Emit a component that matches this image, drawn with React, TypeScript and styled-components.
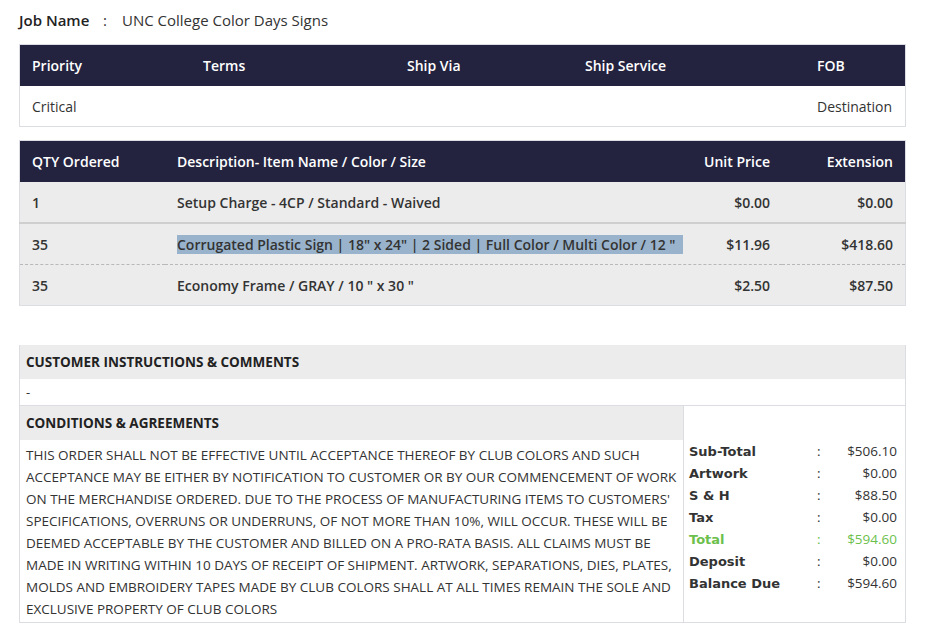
import React from "react";
import styled, { createGlobalStyle } from "styled-components";

const G = createGlobalStyle`
  body { margin: 0; background: #fff; font-family: "Open Sans", sans-serif; color: #333; }
`;
const Page = styled.div`padding: 8px 22px 0 19px; width: 887px;`;
const JobRow = styled.div`display: flex; align-items: center; height: 24px; font-size: 15px; margin-bottom: 12px;`;
const JobLabel = styled.span`font-weight: 600; color: #222; width: 84px;`;
const JobColon = styled.span`width: 19px;`;
const Table = styled.table<{ mb: number }>`width: 100%; table-layout: fixed; border-collapse: collapse; font-size: 14px; border: 1px solid #dcdde3; margin-bottom: ${p => p.mb}px;`;
const Th = styled.th<{ w?: number; r?: boolean }>`
  background: #23233f; color: #fff; font-weight: 600; height: 41px; padding: 0 12px;
  text-align: ${p => (p.r ? "right" : "left")}; ${p => (p.w ? `width:${p.w}px;` : "")}
`;
const Td = styled.td<{ r?: boolean; b?: boolean }>`height: 40px; padding: 0 12px; white-space: nowrap; font-weight: ${p => (p.b ? 600 : 400)}; text-align: ${p => (p.r ? "right" : "left")};`;
const Tr = styled.tr<{ dashed?: boolean; gray?: boolean }>`
  background: ${p => (p.gray ? "#ececec" : "#fff")};
  border-bottom: ${p => (p.dashed ? "1px dashed #b8b8b8" : "2px solid #cfcfcf")};
  &:last-child { border-bottom: none; }
`;
const Sel = styled.span`background: #9ab3cc;`;
const Box = styled.div`border: 1px solid #dcdde3; border-top: none;`;
const SecHead = styled.div`background: #ececec; height: 34px; display: flex; align-items: center; padding: 0 6px; font-weight: 700; font-size: 13.5px; color: #222;`;
const Dash = styled.div`height: 26px; display: flex; align-items: center; padding: 0 6px; font-size: 13px; border-bottom: 1px solid #dcdde3;`;
const Split = styled.div`display: grid; grid-template-columns: 664px 1fr;`;
const Left = styled.div`border-right: 1px solid #dcdde3;`;
const Cond = styled.div`padding: 4px 6px 2px; font-size: 13.5px; line-height: 22px; color: #333;`;
const Sum = styled.div`padding: 34px 8px 0 5px;`;
const SRow = styled.div<{ c?: string }>`display: grid; grid-template-columns: 128px 30px 1fr; height: 22px; align-items: center; font-size: 13.5px; color: ${p => p.c || "#333"};`;
const SLabel = styled.span`font-family: "DejaVu Sans", sans-serif; font-weight: 700; font-size: 13px; color: inherit;`;
const SVal = styled.span`text-align: right;`;

const sums: [string, string, string?][] = [
  ["Sub-Total", "$506.10"], ["Artwork", "$0.00"], ["S & H", "$88.50"], ["Tax", "$0.00"],
  ["Total", "$594.60", "#6cbf4c"], ["Deposit", "$0.00"], ["Balance Due", "$594.60"],
];

export default function App() {
  return (
    <Page>
      <G />
      <JobRow><JobLabel>Job Name</JobLabel><JobColon>:</JobColon><span>UNC College Color Days Signs</span></JobRow>
      <Table mb={13}>
        <thead><tr><Th w={147}>Priority</Th><Th w={180}>Terms</Th><Th w={154}>Ship Via</Th><Th w={208}>Ship Service</Th><Th>FOB</Th></tr></thead>
        <tbody><Tr><Td>Critical</Td><Td /><Td /><Td /><Td>Destination</Td></Tr></tbody>
      </Table>
      <Table mb={39}>
        <thead><tr><Th w={121}>QTY Ordered</Th><Th>Description- Item Name / Color / Size</Th><Th r w={110}>Unit Price</Th><Th r w={99}>Extension</Th></tr></thead>
        <tbody>
          <Tr gray><Td b>1</Td><Td b>Setup Charge - 4CP / Standard - Waived</Td><Td b r>$0.00</Td><Td b r>$0.00</Td></Tr>
          <Tr gray dashed><Td b>35</Td><Td b><Sel>Corrugated Plastic Sign | 18" x 24" | 2 Sided | Full Color / Multi Color / 12 "&nbsp;&nbsp;</Sel></Td><Td b r>$11.96</Td><Td b r>$418.60</Td></Tr>
          <Tr gray><Td b>35</Td><Td b>Economy Frame / GRAY / 10 " x 30 "</Td><Td b r>$2.50</Td><Td b r>$87.50</Td></Tr>
        </tbody>
      </Table>
      <Box>
        <SecHead>CUSTOMER INSTRUCTIONS &amp; COMMENTS</SecHead>
        <Dash>-</Dash>
        <Split>
          <Left>
            <SecHead>CONDITIONS &amp; AGREEMENTS</SecHead>
            <Cond>THIS ORDER SHALL NOT BE EFFECTIVE UNTIL ACCEPTANCE THEREOF BY CLUB COLORS AND SUCH ACCEPTANCE MAY BE EITHER BY NOTIFICATION TO CUSTOMER OR BY OUR COMMENCEMENT OF WORK ON THE MERCHANDISE ORDERED. DUE TO THE PROCESS OF MANUFACTURING ITEMS TO CUSTOMERS' SPECIFICATIONS, OVERRUNS OR UNDERRUNS, OF NOT MORE THAN 10%, WILL OCCUR. THESE WILL BE DEEMED ACCEPTABLE BY THE CUSTOMER AND BILLED ON A PRO-RATA BASIS. ALL CLAIMS MUST BE MADE IN WRITING WITHIN 10 DAYS OF RECEIPT OF SHIPMENT. ARTWORK, SEPARATIONS, DIES, PLATES, MOLDS AND EMBROIDERY TAPES MADE BY CLUB COLORS SHALL AT ALL TIMES REMAIN THE SOLE AND EXCLUSIVE PROPERTY OF CLUB COLORS</Cond>
          </Left>
          <Sum>
            {sums.map(([l, v, c]) => (
              <SRow key={l} c={c}><SLabel>{l}</SLabel><span>:</span><SVal>{v}</SVal></SRow>
            ))}
          </Sum>
        </Split>
      </Box>
    </Page>
  );
}
